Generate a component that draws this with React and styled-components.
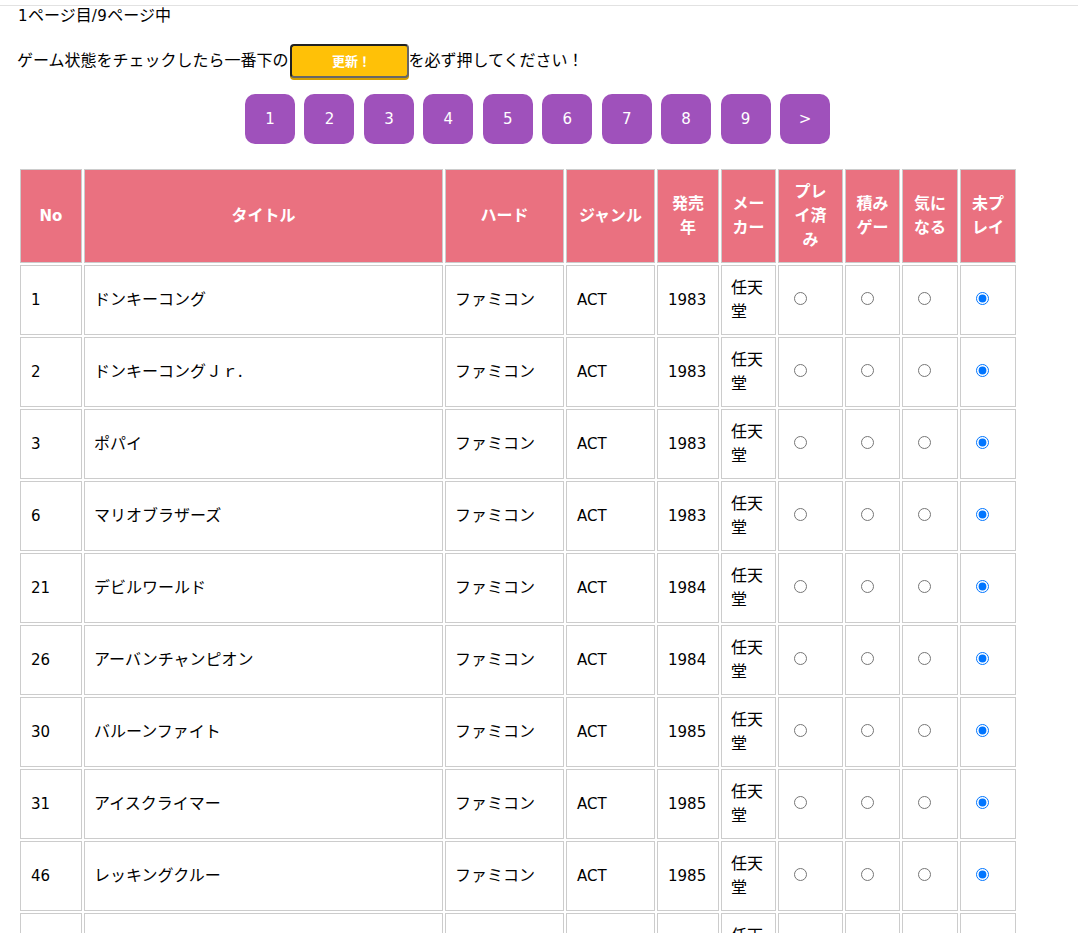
import React from 'react'
import styled, { createGlobalStyle } from 'styled-components'

const GlobalStyle = createGlobalStyle`
  html, body {
    margin: 0;
    padding: 0;
    background: #fff;
    overflow: hidden;
  }
  body {
    color: #000;
    font-family: "Noto Sans CJK JP", "Open Sans", sans-serif;
    font-size: 16px;
  }
`

const TopRule = styled.div`
  margin-top: 5px;
  height: 1px;
  background: #e2e2e2;
`

const Content = styled.div`
  padding-left: 18px;
`

const PageInfo = styled.p`
  margin: 0;
  height: 19px;
  line-height: 17px;
`

const Digit = styled.span`
  font-family: "DejaVu Sans", sans-serif;
  font-size: 15px;
  letter-spacing: 0.5px;
`

const Notice = styled.div`
  display: flex;
  align-items: flex-start;
  margin-top: 19px;
  margin-left: -1px;
  height: 35px;
  line-height: 30px;
`

const UpdateButton = styled.button`
  width: 119px;
  height: 34px;
  margin-left: 1px;
  padding: 0 0 2px 5px;
  background: #ffc107;
  color: #fff;
  font-family: inherit;
  font-size: 13px;
  font-weight: 700;
  border: 2px solid;
  border-color: #222 #666 #666 #222;
  border-radius: 4px;
  box-shadow: 0 2px 0 #d39e00;
`

const Pager = styled.nav`
  display: flex;
  justify-content: center;
  gap: 9.45px;
  margin-top: 15px;
  padding-right: 21px;
`

const PageLink = styled.a`
  display: flex;
  align-items: center;
  justify-content: center;
  width: 50px;
  height: 50px;
  border-radius: 10px;
  background: #9f51bb;
  color: #fff;
  font-family: "DejaVu Sans", sans-serif;
  font-size: 15px;
`

const Table = styled.table`
  table-layout: fixed;
  width: 1000px;
  margin-top: 23px;
  border-collapse: separate;
  border-spacing: 2px;
`

const Head = styled.th`
  width: ${p => p.$w}px;
  padding: ${p => (p.$latin ? '10px' : '8px 10px 12px')};
  border: 1px solid #ccc;
  background: #ea7180;
  color: #fff;
  font-family: ${p => (p.$latin ? '"DejaVu Sans", sans-serif' : 'inherit')};
  font-size: ${p => (p.$latin ? 15 : 16)}px;
  font-weight: 700;
  line-height: 24px;
  text-align: center;
  box-sizing: border-box;
`

const Cell = styled.td`
  padding: ${p => (p.$latin ? '10px' : '8px 10px 12px 9px')};
  border: 1px solid #ccc;
  font-family: ${p => (p.$latin ? '"DejaVu Sans", sans-serif' : 'inherit')};
  font-size: ${p => (p.$latin ? 15 : 16)}px;
  line-height: 24px;
  box-sizing: border-box;
`

const RadioCell = styled.td`
  padding: 8px 10px 12px;
  border: 1px solid #ccc;
  line-height: 24px;
  box-sizing: border-box;
`

const columns = [
  ['No', 62, true],
  ['タイトル', 359],
  ['ハード', 119],
  ['ジャンル', 89],
  ['発売年', 62],
  ['メーカー', 55],
  ['プレイ済み', 65],
  ['積みゲー', 55],
  ['気になる', 56],
  ['未プレイ', 56],
]

const games = [
  [1, 'ドンキーコング', 1983],
  [2, 'ドンキーコングＪｒ.', 1983],
  [3, 'ポパイ', 1983],
  [6, 'マリオブラザーズ', 1983],
  [21, 'デビルワールド', 1984],
  [26, 'アーバンチャンピオン', 1984],
  [30, 'バルーンファイト', 1985],
  [31, 'アイスクライマー', 1985],
  [46, 'レッキングクルー', 1985],
  ['', '', ''],
]

const pages = ['1', '2', '3', '4', '5', '6', '7', '8', '9', '>']

const StatusRadios = ({ name }) => (
  <>
    <RadioCell><input type="radio" name={name} /></RadioCell>
    <RadioCell><input type="radio" name={name} /></RadioCell>
    <RadioCell><input type="radio" name={name} /></RadioCell>
    <RadioCell><input type="radio" name={name} defaultChecked /></RadioCell>
  </>
)

export default function App() {
  return (
    <>
      <GlobalStyle />
      <TopRule />
      <Content>
        <PageInfo><Digit>1</Digit>ページ目<Digit>/9</Digit>ページ中</PageInfo>
        <Notice>
          ゲーム状態をチェックしたら一番下の
          <UpdateButton>更新！</UpdateButton>
          を必ず押してください！
        </Notice>
        <Pager>
          {pages.map(p => <PageLink key={p}>{p}</PageLink>)}
        </Pager>
        <Table>
          <thead>
            <tr>
              {columns.map(([label, w, latin]) => <Head key={label} $w={w} $latin={latin}>{label}</Head>)}
            </tr>
          </thead>
          <tbody>
            {games.map(([no, title, year], i) => (
              <tr key={i}>
                <Cell $latin>{no}</Cell>
                <Cell>{title}</Cell>
                <Cell>{title && 'ファミコン'}</Cell>
                <Cell $latin>{title && 'ACT'}</Cell>
                <Cell $latin>{year}</Cell>
                <Cell>任天堂</Cell>
                <StatusRadios name={`game${i}`} />
              </tr>
            ))}
          </tbody>
        </Table>
      </Content>
    </>
  )
}
